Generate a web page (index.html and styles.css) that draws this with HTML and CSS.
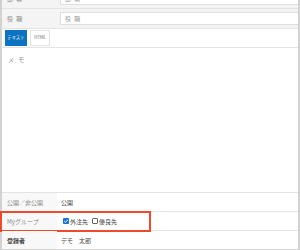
FILE: index.html
```html
<!DOCTYPE html>
<html lang="ja">
<head>
<meta charset="utf-8">
<link rel="stylesheet" href="styles.css">
</head>
<body>
<div class="frame">
  <div class="top">
    <div class="trow">
      <div class="tlabel">部 署</div>
      <div class="tinput">部 署</div>
    </div>
    <div class="trow">
      <div class="tlabel">役 職</div>
      <div class="tinput">役 職</div>
    </div>
  </div>
  <div class="toolbar">
    <span class="btn btn-on"><span class="btxt">テキスト</span></span>
    <span class="btn"><span class="btxt">HTML</span></span>
  </div>
  <div class="memo">メ モ</div>
  <div class="brow">
    <div class="blabel">公開／非公開</div>
    <div class="bval">公開</div>
  </div>
  <div class="brow hl">
    <div class="blabel">Myグループ</div>
    <div class="bval checks">
      <span class="chk on"><svg viewBox="0 0 6 6" width="6" height="6"><rect x="0" y="0" width="6" height="6" rx="0.8" fill="#1a73d9"/><path d="M1.2 3.1 L2.5 4.4 L4.9 1.6" fill="none" stroke="#fff" stroke-width="0.9"/></svg>外注先</span>
      <span class="chk"><span class="box"></span>優良先</span>
    </div>
    <div class="redbox"></div>
  </div>
  <div class="brow last">
    <div class="blabel strong">登録者</div>
    <div class="bval">デモ　太郎</div>
  </div>
</div>
</body>
</html>
```

FILE: styles.css
```css
* { box-sizing: border-box; }
html, body { margin: 0; padding: 0; background: #fff; }
body {
  width: 300px; height: 250px; overflow: hidden;
  font-family: "Noto Sans CJK JP", "Noto Sans", sans-serif;
  font-size: 6px; color: #444;
}
.frame {
  width: 300px; height: 250px;
  border-left: 2px solid #d2d2d2;
  border-right: 2px solid #d2d2d2;
  border-bottom: 1px solid #d2d2d2;
  display: flex; flex-direction: column;
}
.top { margin-top: -11px; }
.trow {
  height: 20px;
  display: grid; grid-template-columns: 58px 1fr;
  align-items: center;
  background: #f4f4f4;
  border-bottom: 1px solid #e4e4e4;
}
.tlabel { padding-left: 5px; color: #888; letter-spacing: 1px; }
.tinput {
  height: 13px; background: #fff;
  border: 1px solid #dedede; border-right: none;
  padding-left: 4px; color: #999; letter-spacing: 1px;
  display: flex; align-items: center;
}
.toolbar {
  height: 19px; display: flex; align-items: center; gap: 3px;
  padding-left: 3px; border-bottom: 1px solid #e4e4e4;
}
.btn {
  height: 16px; display: flex; align-items: center; justify-content: center;
  border: 1px solid #e2e2e2; background: #fff; color: #666;
  overflow: hidden; width: 20px;
}
.btxt { display: block; white-space: nowrap; transform: scale(0.72); line-height: 6px; }
.btn-on { background: #0b73c2; border-color: #0b73c2; color: #fff; width: 22px; }
.memo {
  flex: 1; padding: 7px 0 0 6px; color: #888; letter-spacing: 1.5px;
  border-bottom: 1px solid #e4e4e4;
}
.brow {
  height: 19px; position: relative;
  display: grid; grid-template-columns: 55px 1fr;
  border-bottom: 1px solid #e6e6e6;
}
.brow.last { height: 18px; border-bottom: none; }
.blabel {
  background: #f8f8f8; color: #888; padding-left: 5px;
  display: flex; align-items: center;
}
.blabel.strong { color: #444; font-weight: bold; }
.bval { padding-left: 4px; display: flex; align-items: center; color: #444; }
.checks { gap: 4px; padding-left: 6px; }
.chk { display: flex; align-items: center; gap: 1px; }
.box { width: 6px; height: 6px; border: 1px solid #666; border-radius: 1px; background: #fff; }
.redbox {
  position: absolute; left: -2px; top: -1px; width: 151px; height: 21px;
  border: 2px solid #ef4a2e;
}
```
